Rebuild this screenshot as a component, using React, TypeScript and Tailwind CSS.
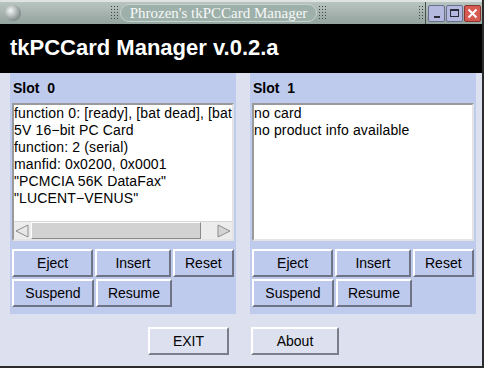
import React from "react";

const leftLines = [
  "function 0: [ready], [bat dead], [bat",
  "5V 16\u2212bit PC Card",
  "function: 2 (serial)",
  "manfid: 0x0200, 0x0001",
  '"PCMCIA 56K DataFax"',
  '"LUCENT\u2212VENUS"',
];

const rightLines = ["no card", "no product info available"];

function Grip({ w }: { w: string }) {
  return (
    <div
      className={`${w} h-[16px] bg-[radial-gradient(circle,#3c4644_0.8px,transparent_1px)] bg-[length:3px_3px]`}
    />
  );
}

function TkButton({ label, w }: { label: string; w: string }) {
  return (
    <div
      className={`${w} h-[28px] flex items-center justify-center bg-[#bdc9ed] border-2 border-t-white border-l-white border-b-[#6e7485] border-r-[#6e7485] text-[14px] text-black`}
    >
      {label}
    </div>
  );
}

function Slot({
  name,
  lines,
  scroll,
}: {
  name: string;
  lines: string[];
  scroll?: boolean;
}) {
  return (
    <div className="w-[226px] h-[241px] bg-[#bfcbec] px-[2px] flex flex-col">
      <div className="h-[30px] flex items-center pl-[1px] font-bold text-[14px] text-black whitespace-pre">
        {name}
      </div>
      <div className="h-[138px] bg-white border-2 border-t-[#9a9a9a] border-l-[#9a9a9a] border-b-[#e4e4e4] border-r-[#e4e4e4] flex flex-col overflow-hidden">
        <div className="flex-1 overflow-hidden text-[14px] leading-[17px] text-black whitespace-nowrap tracking-[0.15px]">
          {lines.map((l) => (
            <div key={l}>{l}</div>
          ))}
        </div>
        {scroll && (
          <div className="h-[18px] flex bg-[#ececec] border-t border-[#d6d6d6]">
            <div className="w-[16px] flex items-center justify-center">
              <svg width="16" height="16" viewBox="0 0 16 16">
                <polygon
                  points="14,2 2,8 14,14"
                  fill="#e8e8e8"
                  stroke="#8c8c8c"
                  strokeWidth="1"
                />
              </svg>
            </div>
            <div className="w-[170px] ml-[1px] bg-[#d2d2d2] border border-t-white border-l-white border-b-[#8a8a8a] border-r-[#8a8a8a]" />
            <div className="flex-1" />
            <div className="w-[16px] flex items-center justify-center">
              <svg width="16" height="16" viewBox="0 0 16 16">
                <polygon
                  points="2,2 14,8 2,14"
                  fill="#d4d4d4"
                  stroke="#8c8c8c"
                  strokeWidth="1"
                />
              </svg>
            </div>
          </div>
        )}
      </div>
      <div className="mt-[8px] flex gap-[2px]">
        <TkButton label="Eject" w="w-[82px]" />
        <TkButton label="Insert" w="w-[76px]" />
        <TkButton label="Reset" w="w-[62px]" />
      </div>
      <div className="mt-[2px] flex gap-[2px]">
        <TkButton label="Suspend" w="w-[82px]" />
        <TkButton label="Resume" w="w-[76px]" />
      </div>
    </div>
  );
}

export default function App() {
  return (
    <div className="w-[486px] h-[369px] bg-white font-['Liberation_Sans',Arial,sans-serif]">
      <div className="w-[484px] h-[368px] border-r-2 border-b-2 border-[#2c2c2c] bg-[#dde0ef] flex flex-col">
        {/* title bar */}
        <div className="h-[24px] border-t-2 border-[#dfe3e2] bg-gradient-to-b from-[#b9c4c1] to-[#93a39e] flex items-center">
          <div className="ml-[5px] w-[16px] h-[16px] rounded-full bg-[radial-gradient(circle_at_35%_35%,#f4f6f6,#9aa4a2_55%,#5c6664)]" />
          <div className="ml-[89px]">
            <Grip w="w-[8px]" />
          </div>
          <div className="ml-[2px] h-[18px] w-[197px] rounded-full bg-[#9db0aa] border border-[#c6d2ce] flex items-center justify-center font-['Liberation_Serif',serif] text-[15px] text-[#f6f8f8]">
            Phrozen's tkPCCard Manager
          </div>
          <div className="ml-[1px]">
            <Grip w="w-[9px]" />
          </div>
          <div className="ml-[91px]">
            <Grip w="w-[6px]" />
          </div>
          <div className="ml-[1px] w-[1px] h-[22px] bg-[#4a5250]" />
          <div className="ml-[2px] flex gap-[1px]">
            <div className="w-[17px] h-[17px] rounded-[2px] bg-[#b4b9df] border border-[#6a6f90] flex items-end justify-center pb-[3px]">
              <div className="w-[6px] h-[2px] bg-[#2a2a3a]" />
            </div>
            <div className="w-[17px] h-[17px] rounded-[2px] bg-[#b4b9df] border border-[#6a6f90] flex items-center justify-center">
              <div className="w-[9px] h-[8px] border border-t-2 border-[#2a2a3a]" />
            </div>
            <div className="w-[17px] h-[17px] rounded-[2px] bg-[#d65a52] border border-[#8a3430] flex items-center justify-center">
              <svg width="11" height="11" viewBox="0 0 11 11">
                <path d="M1.5 1.5 L9.5 9.5 M9.5 1.5 L1.5 9.5" stroke="#fff" strokeWidth="2" />
              </svg>
            </div>
          </div>
        </div>

        {/* header */}
        <div className="h-[49px] bg-black flex items-center pl-[10px] pb-[2px] text-white font-bold text-[22px]">
          tkPCCard Manager v.0.2.a
        </div>

        {/* slots */}
        <div className="flex pl-[10px] gap-[14px]">
          <Slot name="Slot  0" lines={leftLines} scroll />
          <Slot name="Slot  1" lines={rightLines} />
        </div>

        {/* bottom buttons */}
        <div className="mt-[13px] flex pl-[148px] gap-[22px]">
          <div className="w-[81px] h-[28px] flex items-center justify-center bg-[#dde0ef] border-2 border-t-white border-l-white border-b-[#7a7e8a] border-r-[#7a7e8a] text-[14px] text-black">
            EXIT
          </div>
          <div className="w-[88px] h-[28px] flex items-center justify-center bg-[#dde0ef] border-2 border-t-white border-l-white border-b-[#7a7e8a] border-r-[#7a7e8a] text-[14px] text-black">
            About
          </div>
        </div>
      </div>
    </div>
  );
}
